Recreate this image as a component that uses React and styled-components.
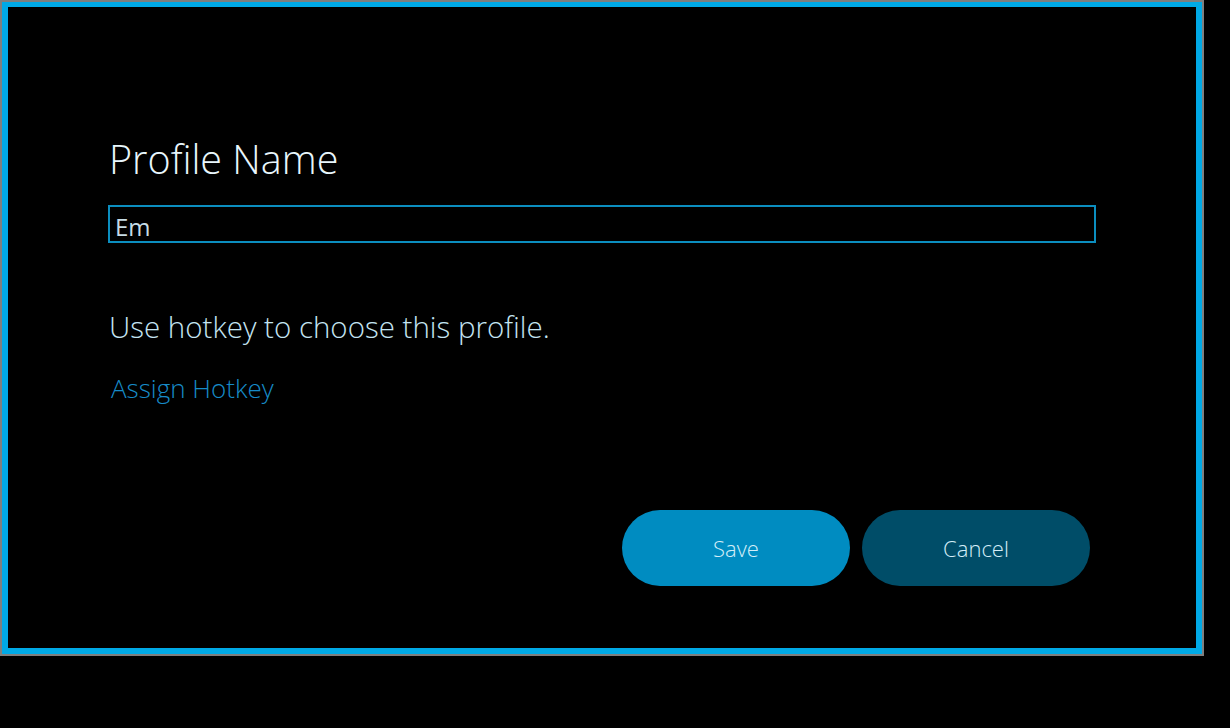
import React, { useState } from 'react';
import styled, { createGlobalStyle } from 'styled-components';

const GlobalStyle = createGlobalStyle`
  html, body {
    margin: 0;
    padding: 0;
    background: #000;
    width: 100%;
    height: 100%;
    overflow: hidden;
  }
  body {
    font-family: "Open Sans", "Noto Sans", sans-serif;
  }
`;

const Page = styled.div`
  width: 1230px;
  height: 728px;
  background: #000;
`;

const Dialog = styled.div`
  box-sizing: border-box;
  width: 1204px;
  height: 656px;
  border: 2px solid #7f7f7f;
  background: #000;
`;

const Frame = styled.div`
  box-sizing: border-box;
  width: 1200px;
  height: 652px;
  border: 6px solid #00a9e6;
  border-top-width: 5px;
  padding: 126px 100px 0 100px;
  display: flex;
  flex-direction: column;
`;

const Title = styled.h1`
  margin: 0 0 0 1px;
  font-size: 39.5px;
  font-weight: 300;
  line-height: 52px;
  color: #e8f6fc;
`;

const NameInput = styled.input`
  box-sizing: border-box;
  margin-top: 20px;
  width: 988px;
  height: 38px;
  border: 2px solid #0b8ebf;
  background: #000;
  color: #c6dce6;
  font-family: "Open Sans", sans-serif;
  font-size: 24px;
  padding: 4px 5px 0 5px;
  outline: none;
`;

const Hint = styled.p`
  margin: 64px 0 0 1px;
  font-size: 29.5px;
  font-weight: 300;
  line-height: 40px;
  color: #c4e4f2;
`;

const LinkButton = styled.button`
  align-self: flex-start;
  margin: 24px 0 0 3px;
  padding: 0;
  border: none;
  background: none;
  font-family: "Open Sans", sans-serif;
  font-size: 26px;
  font-weight: 300;
  line-height: 34px;
  color: #178bc8;
  cursor: pointer;
`;

const Actions = styled.div`
  display: flex;
  justify-content: flex-end;
  gap: 12px;
  margin-top: 105px;
  margin-right: 6px;
`;

const PillButton = styled.button`
  width: 228px;
  height: 76px;
  border: none;
  border-radius: 38px;
  background: ${(p) => (p.$primary ? '#008cc1' : '#004d68')};
  color: #d4eef8;
  font-family: "Open Sans", sans-serif;
  font-size: 22px;
  font-weight: 300;
  cursor: pointer;
`;

export default function App() {
  const [name, setName] = useState('Em');

  return (
    <Page>
      <GlobalStyle />
      <Dialog>
        <Frame>
          <Title>Profile Name</Title>
          <NameInput value={name} onChange={(e) => setName(e.target.value)} />
          <Hint>Use hotkey to choose this profile.</Hint>
          <LinkButton>Assign Hotkey</LinkButton>
          <Actions>
            <PillButton $primary>Save</PillButton>
            <PillButton>Cancel</PillButton>
          </Actions>
        </Frame>
      </Dialog>
    </Page>
  );
}
